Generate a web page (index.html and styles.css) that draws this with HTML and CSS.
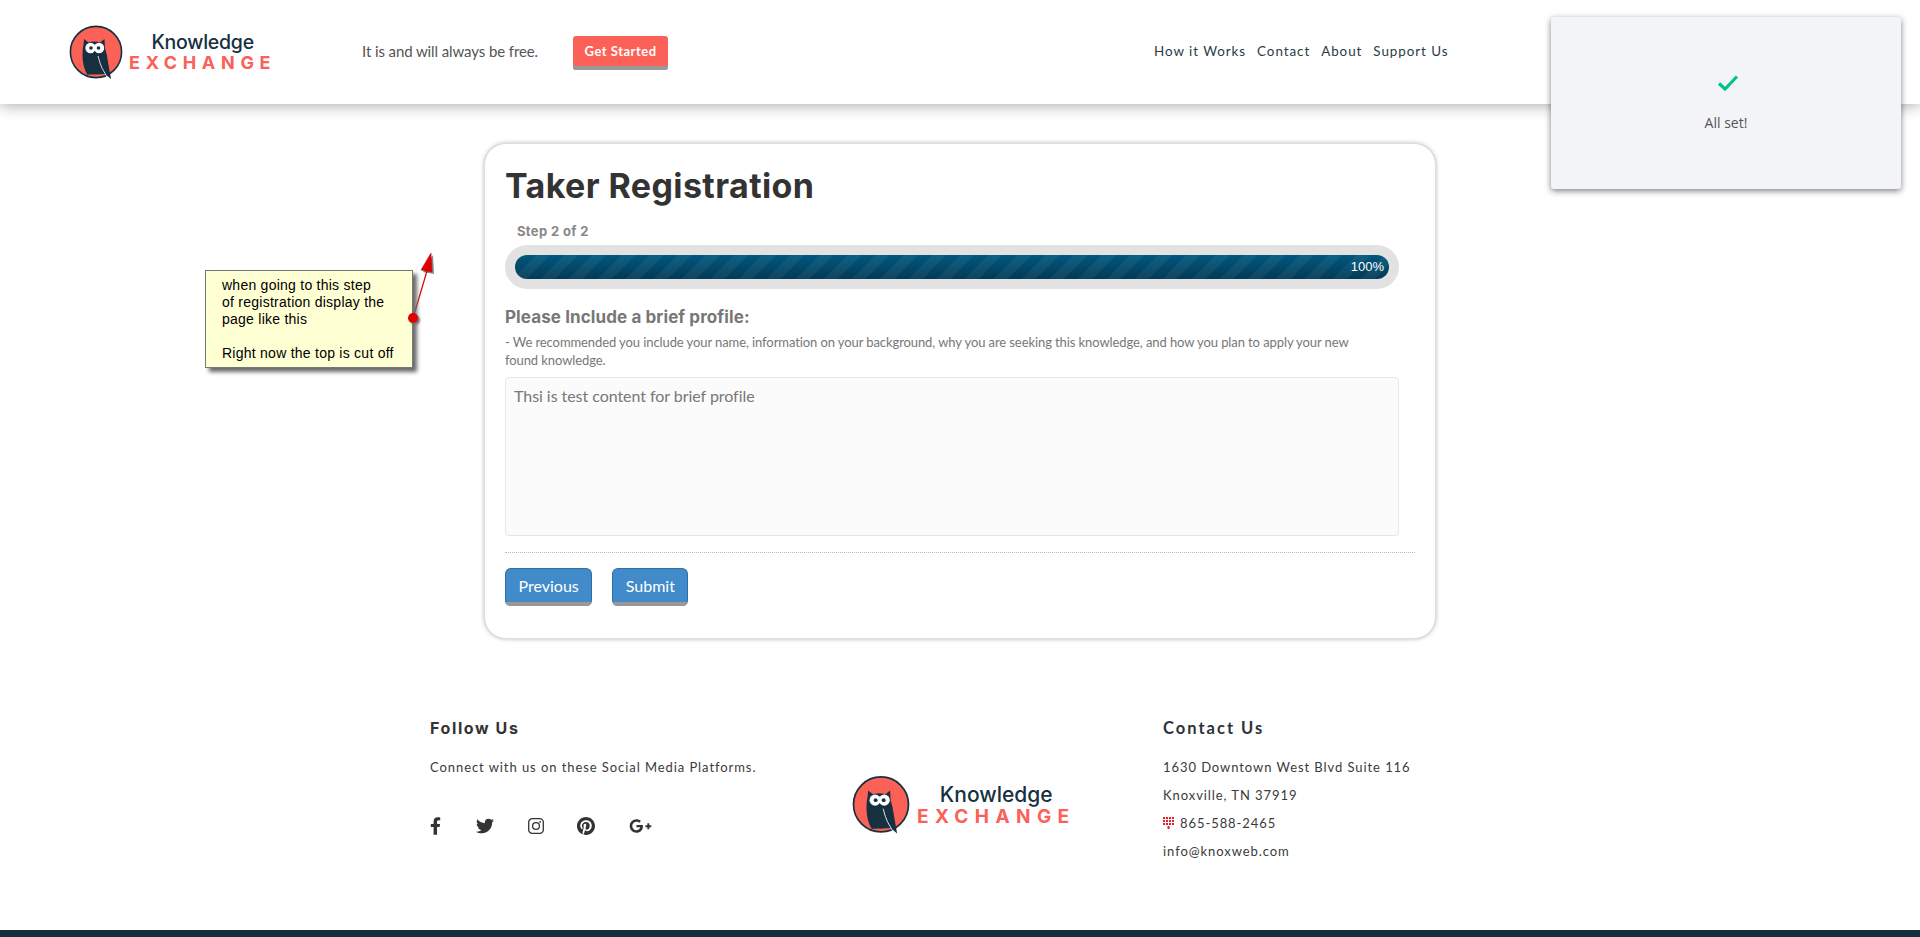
FILE: index.html
```html
<!DOCTYPE html>
<html lang="en">
<head>
<meta charset="utf-8">
<title>Taker Registration - Knowledge Exchange</title>
<link rel="stylesheet" href="styles.css">
</head>
<body>
<svg class="defs" width="0" height="0" aria-hidden="true">
  <symbol id="owl" viewBox="0 0 54 55">
    <circle cx="27" cy="27" r="25.6" fill="#fb6157" stroke="#17303f" stroke-width="1.6"/>
    <path d="M15 14l4.500 3.500q6-2 11.500 0l4.500-3.500 .5 9q2 6 3 14l3 17-6-5-17.500 1q-5-8-5-19 0-8 1-11z" fill="#17303f"/>
    <ellipse cx="21.500" cy="23" rx="5.200" ry="5.200" fill="#fff"/>
    <ellipse cx="30" cy="23" rx="5.200" ry="5.200" fill="#fff"/>
    <circle cx="22" cy="23" r="1.800" fill="#17303f"/>
    <circle cx="29.500" cy="23" r="1.800" fill="#17303f"/>
    <path d="M25.800 26l-1.200 1.500 1.200 2.500 1.200-2.500z" fill="#17303f"/>
    <path d="M29 31q2 8 4 12l5 9" fill="none" stroke="#fff" stroke-width=".8"/>
    <path d="M19 50h7" stroke="#fb6157" stroke-width=".8"/>
  </symbol>
</svg>

<header class="topbar">
  <a class="logo logo-small" href="#">
    <svg class="owl"><use href="#owl"/></svg>
    <span class="wordmark"><span class="wm-top">Knowledge</span><span class="wm-bottom">EXCHANGE</span></span>
  </a>
  <p class="tagline">It is and will always be free.</p>
  <a class="cta" href="#">Get Started</a>
  <nav class="mainnav">
    <a href="#">How it Works</a>
    <a href="#">Contact</a>
    <a href="#">About</a>
    <a href="#">Support Us</a>
  </nav>
</header>

<main class="content">
  <section class="card">
    <h1 class="title">Taker Registration</h1>
    <div class="step">Step 2 of 2</div>
    <div class="track"><div class="bar"><span>100%</span></div></div>
    <h2 class="prompt">Please Include a brief profile:</h2>
    <p class="hint">- We recommended you include your name, information on your background, why you are seeking this knowledge, and how you plan to apply your new found knowledge.</p>
    <div class="textarea">Thsi is test content for brief profile</div>
    <hr class="rule">
    <div class="actions">
      <button class="btn" type="button">Previous</button>
      <button class="btn" type="button">Submit</button>
    </div>
  </section>
</main>

<footer class="footer">
  <div class="col-follow">
    <h3 class="foot-title">Follow Us</h3>
    <p class="foot-line">Connect with us on these Social Media Platforms.</p>
    <div class="social">
      <svg class="ic ic-f" viewBox="0 0 320 512"><path d="M279.14 288l14.22-92.66h-88.91v-60.13c0-25.35 12.42-50.06 52.24-50.06h40.42V6.26S260.43 0 225.36 0c-73.22 0-121.08 44.38-121.08 124.72v70.62H22.89V288h81.39v224h100.17V288z"/></svg>
      <svg class="ic ic-t" viewBox="0 0 512 512"><path d="M459.37 151.716c.325 4.548.325 9.097.325 13.645 0 138.72-105.583 298.558-298.558 298.558-59.452 0-114.68-17.219-161.137-47.106 8.447.974 16.568 1.299 25.34 1.299 49.055 0 94.213-16.568 130.274-44.832-46.132-.975-84.792-31.188-98.112-72.772 6.498.974 12.995 1.624 19.818 1.624 9.421 0 18.843-1.3 27.614-3.573-48.081-9.747-84.143-51.98-84.143-102.985v-1.299c13.969 7.797 30.214 12.67 47.431 13.319-28.264-18.843-46.781-51.005-46.781-87.391 0-19.492 5.197-37.36 14.294-52.954 51.655 63.675 129.3 105.258 216.365 109.807-1.624-7.797-2.599-15.918-2.599-24.04 0-57.828 46.782-104.934 104.934-104.934 30.213 0 57.502 12.67 76.67 33.137 23.715-4.548 46.456-13.645 66.599-25.665-7.798 24.366-24.366 44.833-46.132 57.827 21.117-2.273 41.584-8.122 60.426-16.243-14.292 20.791-32.161 39.308-52.628 54.253z"/></svg>
      <svg class="ic ic-i" viewBox="0 0 16 16"><rect x=".7" y=".7" width="14.600" height="14.600" rx="3.600" fill="none" stroke="#333" stroke-width="1.300"/><circle cx="8" cy="8" r="3.400" fill="none" stroke="#333" stroke-width="1.300"/><circle cx="12.100" cy="3.900" r=".9"/></svg>
      <svg class="ic ic-p" viewBox="0 8 496 496"><path d="M496 256c0 137-111 248-248 248-25.6 0-50.2-3.900-73.400-11.100 10.100-16.500 25.200-43.500 30.800-65 3-11.600 15.400-59 15.400-59 8.100 15.400 31.700 28.500 56.800 28.500 74.800 0 128.700-68.800 128.700-154.300 0-81.900-66.900-143.200-152.900-143.200-107 0-163.900 71.800-163.900 150.100 0 36.400 19.400 81.700 50.300 96.100 4.700 2.200 7.200 1.200 8.300-3.300.8-3.400 5-20.300 6.900-28.100.6-2.500.3-4.700-1.700-7.100-10.100-12.500-18.300-35.300-18.300-56.600 0-54.700 41.400-107.600 112-107.600 60.900 0 103.600 41.500 103.600 100.900 0 67.100-33.900 113.600-78 113.600-24.300 0-42.600-20.100-36.700-44.800 7-29.500 20.500-61.300 20.500-82.600 0-19-10.200-34.900-31.400-34.900-24.900 0-44.900 25.700-44.900 60.200 0 22 7.400 36.800 7.400 36.800s-24.500 103.800-29 123.200c-5 21.400-3 51.600-.9 71.200C65.400 450.900 0 361.100 0 256 0 119 111 8 248 8s248 111 248 248z"/></svg>
      <svg class="ic ic-g" viewBox="0 0 640 512"><path d="M386.061 228.496c1.834 9.692 3.143 19.384 3.143 31.956C389.204 370.205 315.599 448 204.8 448c-106.084 0-192-85.915-192-192s85.916-192 192-192c51.864 0 95.083 18.859 128.611 50.292l-52.126 50.03c-14.145-13.621-39.028-29.599-76.485-29.599-65.484 0-118.92 54.221-118.92 121.277 0 67.056 53.436 121.277 118.92 121.277 75.961 0 104.513-54.745 108.965-82.773H204.8v-66.009h181.261zm185.406 6.437V179.2h-56.001v55.733h-55.733v56.001h55.733v55.733h56.001v-55.733H627.2v-56.001h-55.733z"/></svg>
    </div>
  </div>
  <a class="logo logo-large" href="#">
    <svg class="owl"><use href="#owl"/></svg>
    <span class="wordmark"><span class="wm-top">Knowledge</span><span class="wm-bottom">EXCHANGE</span></span>
  </a>
  <div class="col-contact">
    <h3 class="foot-title contact-title">Contact Us</h3>
    <p class="foot-line">1630 Downtown West Blvd Suite 116</p>
    <p class="foot-line">Knoxville, TN 37919</p>
    <p class="foot-line phone">
      <svg class="keypad" viewBox="0 0 11 12"><path d="M0 0h2v2H0zM3 0h2v2H3zM6 0h2v2H6zM9 0h2v2H9zM0 3h2v2H0zM3 3h2v2H3zM6 3h2v2H6zM9 3h2v2H9zM0 6h2v2H0zM3 6h2v2H3zM6 6h2v2H6zM9 6h2v2H9zM4.500 9h2v3h-2z"/></svg>865-588-2465
    </p>
    <p class="foot-line">info@knoxweb.com</p>
  </div>
</footer>
<div class="footbar"></div>

<aside class="note">
  <svg class="note-arrow" viewBox="0 0 40 80" width="40" height="80">
    <path class="arrow-shadow" d="M28 10L18 27l11 2z" fill="#888"/>
    <path d="M8 73L22 26" fill="none" stroke="#e00000" stroke-width="1.200"/>
    <path d="M26 8L16 25l11 2z" fill="#e00000" stroke="#b00000" stroke-width=".5"/>
  </svg>
  <div class="note-box">when going to this step<br>of registration display the<br>page like this<br><br>Right now the top is cut off</div>
  <span class="note-dot"></span>
</aside>

<aside class="toast">
  <svg class="check" viewBox="0 0 22 16" width="22" height="16"><path d="M2 8.500l6 5.500L20 1.500" fill="none" stroke="#00c389" stroke-width="3.200"/></svg>
  <p class="toast-text">All set!</p>
</aside>
</body>
</html>
```

FILE: styles.css
```css
* { box-sizing: border-box; }
html, body { margin: 0; height: 937px; overflow: hidden; }
body {
  position: relative;
  display: flex;
  flex-direction: column;
  background: #fff;
  font-family: "Lato", "Liberation Sans", sans-serif;
  color: #333;
}
.defs { position: absolute; }
p, h1, h2, h3 { margin: 0; }
a { text-decoration: none; color: inherit; }

/* Header */
.topbar {
  height: 104px;
  flex: none;
  display: flex;
  align-items: center;
  padding-left: 69px;
  background: #fff;
  box-shadow: 0 2px 14px rgba(0, 0, 0, .32);
}
.logo { display: flex; align-items: center; }
.owl { display: block; flex: none; }
.wordmark { display: flex; flex-direction: column; align-items: center; }
.wm-top { font-family: "Inter", sans-serif; font-weight: 500; color: #17303f; letter-spacing: -.25px; }
.wm-bottom { font-family: "Inter", sans-serif; font-weight: 700; color: #fb6157; }
.logo-small { width: 204px; }
.logo-small .owl { width: 54px; height: 55px; margin-right: 6px; }
.logo-small .wm-top { font-size: 19.500px; line-height: 21px; }
.logo-small .wm-bottom { font-size: 18px; line-height: 19px; letter-spacing: 5.700px; }
.tagline { margin: 0 0 3px 89px; font-size: 15px; letter-spacing: -.1px; color: #555; }
.cta {
  margin-left: 35px;
  width: 95px;
  height: 34px;
  padding-bottom: 4px;
  margin-top: 2px;
  text-align: center;
  line-height: 30px;
  font-size: 13px;
  font-weight: 700;
  letter-spacing: .5px;
  color: #fff;
  background: #fb6157;
  border-radius: 3px;
  box-shadow: inset 0 -4px 0 #999;
}
.mainnav {
  margin: 0 0 2px 486px;
  display: flex;
  gap: 11px;
  font-size: 13.400px;
  letter-spacing: .95px;
  color: #2b3a45;
}

/* Card */
.content { padding-top: 39px; flex: none; }
.card {
  width: 952px;
  height: 496px;
  margin: 0 auto;
  padding: 19px 20px 0;
  background: #fff;
  border: 1px solid #ddd;
  border-radius: 22px;
  box-shadow: 0 0 4px rgba(0, 0, 0, .28);
}
.title {
  font-family: "Inter", sans-serif;
  font-size: 34px;
  line-height: 46px;
  font-weight: 700;
  letter-spacing: .4px;
  color: #333;
}
.step {
  margin: 14px 0 0 12px;
  font-family: "Inter", sans-serif;
  font-size: 13px;
  line-height: 16px;
  font-weight: 700;
  letter-spacing: .35px;
  color: #888;
}
.track {
  width: 894px;
  height: 44px;
  margin-top: 6px;
  padding: 10px;
  background: #e2e2e2;
  border-radius: 22px;
}
.bar {
  height: 24px;
  padding-right: 5px;
  border-radius: 12px;
  text-align: right;
  font-family: "Liberation Sans", sans-serif;
  font-size: 13px;
  line-height: 24px;
  color: #fff;
  background:
    repeating-linear-gradient(-45deg, transparent 0 10px, rgba(255, 255, 255, .05) 10px 20px),
    linear-gradient(#00587f, #033a55);
}
.prompt {
  margin-top: 17px;
  font-family: "Inter", sans-serif;
  font-size: 17px;
  line-height: 22px;
  font-weight: 700;
  letter-spacing: .1px;
  color: #777;
}
.hint {
  width: 860px;
  margin-top: 5px;
  font-size: 13px;
  line-height: 18px;
  letter-spacing: -.09px;
  color: #777;
}
.textarea {
  width: 894px;
  height: 159px;
  margin-top: 8px;
  padding: 8px;
  font-size: 16px;
  line-height: 20px;
  letter-spacing: -.05px;
  color: #777;
  background: #fbfbfb;
  border: 1px solid #e6e6e6;
  border-radius: 4px;
}
.rule {
  width: 910px;
  height: 0;
  margin: 16px 0 15px;
  border: 0;
  border-top: 1px dotted #bbb;
}
.actions { display: flex; gap: 20px; }
.btn {
  height: 38px;
  padding: 0 12.500px 4px;
  font-family: "Lato", sans-serif;
  font-size: 16px;
  color: #fff;
  background: #428bca;
  border: 1px solid #2f6fa8;
  border-bottom-width: 0;
  border-radius: 6px;
  box-shadow: inset 0 -1px 0 #2f6fa8;
  position: relative;
}
.btn::after {
  content: "";
  position: absolute;
  left: -1px; right: -1px; bottom: 0;
  height: 5px;
  background: #999;
  border-radius: 0 0 6px 6px;
  z-index: 0;
  clip-path: inset(1px 0 0 0);
}

/* Footer */
.footer {
  flex: none;
  display: grid;
  grid-template-columns: 422px 311px auto;
  padding: 71px 0 0 430px;
  height: 291px;
}
.foot-title {
  font-family: "Inter", sans-serif;
  font-size: 16px;
  line-height: 36px;
  font-weight: 700;
  letter-spacing: 1.600px;
  color: #333;
}
.contact-title { font-family: "Lato", sans-serif; font-size: 16.500px; letter-spacing: 2px; color: #2b3238; }
.foot-line {
  font-size: 13px;
  line-height: 28px;
  letter-spacing: .93px;
  color: #3a3a3a;
}
.col-follow .foot-title, .contact-title { margin-bottom: 7px; }
.social { display: flex; align-items: center; margin-top: 35px; height: 20px; }
.ic { display: block; fill: #333; height: 18px; }
.ic-f { width: 11px; margin-right: 35px; }
.ic-t { width: 18px; margin-right: 34px; }
.ic-i { width: 16px; height: 16px; margin-right: 33px; }
.ic-p { width: 18px; margin-right: 34px; }
.ic-g { width: 23px; }
.logo-large { width: 222px; height: 60px; margin-top: 65px; }
.logo-large .owl { width: 58px; height: 60px; margin-right: 7px; }
.logo-large .wm-top { font-size: 21px; line-height: 22px; letter-spacing: 0; }
.logo-large .wm-bottom { font-size: 19px; line-height: 21px; letter-spacing: 6.400px; }
.phone { display: flex; align-items: center; gap: 6px; }
.keypad { width: 11px; height: 12px; fill: #e41e26; flex: none; }
.footbar { flex: 1; background: #122d3d; }

/* Sticky note annotation */
.note {
  position: absolute;
  left: 205px;
  top: 245px;
  width: 240px;
  height: 130px;
}
.note-box {
  position: absolute;
  left: 0;
  top: 25px;
  width: 208px;
  height: 98px;
  padding: 6px 0 0 16px;
  font-family: "Liberation Sans", sans-serif;
  font-size: 14px;
  line-height: 17px;
  letter-spacing: .25px;
  color: #000;
  background: #ffffd4;
  border: 1px solid #777;
  box-shadow: 4px 4px 4px #6a6a6a;
}
.note-arrow { position: absolute; left: 200px; top: 0; }
.note-dot {
  position: absolute;
  left: 203px;
  top: 68px;
  width: 10px;
  height: 10px;
  border-radius: 50%;
  background: #e00000;
  box-shadow: 2px 2px 2px #777;
}

/* Toast */
.toast {
  position: absolute;
  left: 1551px;
  top: 17px;
  width: 350px;
  height: 172px;
  padding-top: 58px;
  display: flex;
  flex-direction: column;
  align-items: center;
  background: #f2f4f8;
  border-radius: 3px;
  box-shadow: 0 2px 6px rgba(0, 0, 0, .5);
}
.check { margin-left: 3px; }
.toast-text {
  margin-top: 22px;
  font-family: "Open Sans", sans-serif;
  font-size: 14px;
  line-height: 20px;
  color: #555;
}
```
